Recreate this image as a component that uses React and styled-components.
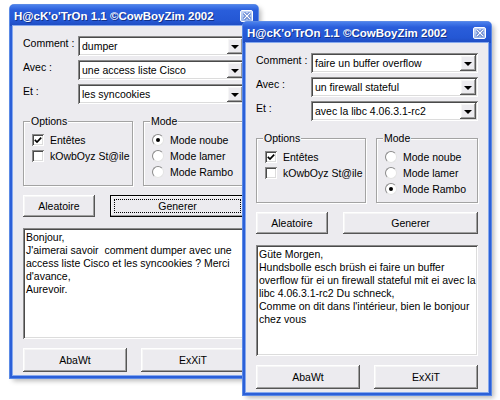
import React from "react";
import styled, { createGlobalStyle } from "styled-components";

const GlobalStyle = createGlobalStyle`
  html, body {
    margin: 0;
    padding: 0;
    background: #ffffff;
  }
  body {
    font-family: "Liberation Sans", Arial, sans-serif;
    font-size: 10.5px;
    color: #000;
  }
`;

const Desktop = styled.div`
  position: relative;
  width: 500px;
  height: 400px;
  overflow: hidden;
  background: #ffffff;
`;

const Frame = styled.div`
  position: absolute;
  left: ${(p) => p.$x}px;
  top: ${(p) => p.$y}px;
  width: 248px;
  box-sizing: border-box;
  padding: 0 3px 3px;
  background: #2c60d8;
  border-radius: 4px 4px 0 0;
  box-shadow: 0 0 0 1px #5b8ae6, 3px 3px 5px rgba(0, 0, 0, 0.28);
`;

const TitleBar = styled.div`
  height: 21px;
  margin: 0 -3px;
  padding: 0 5px 0 4px;
  display: flex;
  align-items: center;
  justify-content: space-between;
  border-radius: 4px 4px 0 0;
  background: linear-gradient(
    to bottom,
    #4a80ec 0%,
    #2a5edb 25%,
    #2457d4 75%,
    #1f4cc0 100%
  );
`;

const Title = styled.span`
  color: #ffffff;
  font-weight: bold;
  font-size: 11.5px;
  white-space: nowrap;
  text-shadow: 1px 1px 0 #12318a;
`;

const CloseBox = styled.div`
  width: 13px;
  height: 12px;
  box-sizing: border-box;
  border: 1px solid #ffffff;
  border-radius: 2px;
  background: linear-gradient(to bottom, #c6d6f6, #9ab6ea);
  display: grid;
  place-items: center;
`;

const Client = styled.div`
  background: #ecebef;
  padding: 10px 10px 3px;
  display: flex;
  flex-direction: column;
  box-shadow: 0 0 0 1px #86a9ee;
`;

const FieldGrid = styled.div`
  display: grid;
  grid-template-columns: 55px 1fr;
  row-gap: 4px;
`;

const FieldLabel = styled.span`
  padding-top: 1px;
  white-space: nowrap;
`;

const sunken = `
  box-shadow: inset 1px 1px #8a8a8a, inset -1px -1px #ffffff,
    inset 2px 2px #4a4a4a, inset -2px -2px #dcdcdc;
`;

const raised = `
  box-shadow: inset -1px -1px #555555, inset 1px 1px #ffffff,
    inset -2px -2px #a0a0a0, inset 2px 2px #f6f6f6;
`;

const Combo = styled.div`
  height: 20px;
  box-sizing: border-box;
  padding: 2px;
  background: #ffffff;
  display: flex;
  align-items: center;
  ${sunken}
`;

const ComboText = styled.span`
  flex: 1;
  padding-left: 2px;
  white-space: nowrap;
  overflow: hidden;
`;

const DropButton = styled.div`
  width: 16px;
  height: 16px;
  background: #ecebef;
  display: grid;
  place-items: center;
  ${raised}
  &::after {
    content: "";
    border-left: 4px solid transparent;
    border-right: 4px solid transparent;
    border-top: 4px solid #000;
    margin-top: 1px;
  }
`;

const Groups = styled.div`
  display: grid;
  grid-template-columns: 110px 1fr;
  gap: 10px;
  margin-top: 17px;
`;

const GroupBox = styled.div`
  position: relative;
  height: 65px;
  box-sizing: border-box;
  border: 1px solid #a3a3a3;
  box-shadow: inset 1px 1px #ffffff, 1px 1px #ffffff;
  padding: 10px 0 0 8px;
  display: flex;
  flex-direction: column;
`;

const Legend = styled.span`
  position: absolute;
  top: -7px;
  left: 6px;
  padding: 0 1px;
  background: #ecebef;
  line-height: 13px;
`;

const Choice = styled.div`
  height: 16px;
  display: flex;
  align-items: center;
  gap: 6px;
  white-space: nowrap;
`;

const CheckSquare = styled.span`
  width: 12px;
  height: 12px;
  box-sizing: border-box;
  background: #ffffff;
  display: grid;
  place-items: center;
  ${sunken}
`;

const RadioDot = styled.span`
  width: 12px;
  height: 12px;
  box-sizing: border-box;
  border-radius: 50%;
  background: #ffffff;
  border: 1px solid;
  border-color: #8a8a8a #e4e4e4 #e4e4e4 #8a8a8a;
  display: grid;
  place-items: center;
  &::after {
    content: "";
    width: 4px;
    height: 4px;
    border-radius: 50%;
    background: ${(p) => (p.$on ? "#000" : "transparent")};
  }
`;

const ButtonRow = styled.div`
  display: grid;
  grid-template-columns: ${(p) => p.$cols};
  gap: ${(p) => p.$gap}px;
  height: ${(p) => p.$h}px;
  margin-top: 9px;
`;

const Button = styled.div`
  position: relative;
  box-sizing: border-box;
  background: #ecebef;
  display: grid;
  place-items: center;
  white-space: nowrap;
  ${raised}
  ${(p) =>
    p.$default &&
    `
    outline: 1px solid #000;
    outline-offset: -1px;
    &::after {
      content: "";
      position: absolute;
      inset: 4px;
      border: 1px dotted #000;
    }
  `}
`;

const TextBox = styled.div`
  margin-top: 11px;
  height: 111px;
  box-sizing: border-box;
  padding: 3px 3px;
  background: #ffffff;
  line-height: 13px;
  white-space: pre;
  overflow: hidden;
  ${sunken}
`;

const Check = () => (
  <svg width="8" height="8" viewBox="0 0 8 8">
    <path d="M0.8 3.8 L3 6 L7.2 1.6" fill="none" stroke="#000" strokeWidth="1.7" />
  </svg>
);

const CloseX = () => (
  <svg width="8" height="8" viewBox="0 0 8 8">
    <path d="M1 1 L7 7 M7 1 L1 7" stroke="#2650b8" strokeWidth="2.6" />
    <path d="M1 1 L7 7 M7 1 L1 7" stroke="#ffffff" strokeWidth="1.4" />
  </svg>
);

const HackWindow = ({ x, y, fields, mode, focused, text }) => (
  <Frame $x={x} $y={y}>
    <TitleBar>
      <Title>H@cK'o'TrOn 1.1 ©CowBoyZim 2002</Title>
      <CloseBox>
        <CloseX />
      </CloseBox>
    </TitleBar>
    <Client>
      <FieldGrid>
        {["Comment :", "Avec :", "Et :"].map((label, i) => (
          <React.Fragment key={label}>
            <FieldLabel>{label}</FieldLabel>
            <Combo>
              <ComboText>{fields[i]}</ComboText>
              <DropButton />
            </Combo>
          </React.Fragment>
        ))}
      </FieldGrid>

      <Groups>
        <GroupBox>
          <Legend>Options</Legend>
          <Choice>
            <CheckSquare>
              <Check />
            </CheckSquare>
            Entêtes
          </Choice>
          <Choice>
            <CheckSquare />
            kOwbOyz St@ile
          </Choice>
        </GroupBox>
        <GroupBox>
          <Legend>Mode</Legend>
          {["Mode noube", "Mode lamer", "Mode Rambo"].map((m) => (
            <Choice key={m}>
              <RadioDot $on={m === mode} />
              {m}
            </Choice>
          ))}
        </GroupBox>
      </Groups>

      <ButtonRow $cols="72px 1fr" $gap={15} $h={22}>
        <Button>Aleatoire</Button>
        <Button $default={focused}>Generer</Button>
      </ButtonRow>

      <TextBox>{text}</TextBox>

      <ButtonRow $cols="1fr 1fr" $gap={14} $h={24}>
        <Button>AbaWt</Button>
        <Button>ExXiT</Button>
      </ButtonRow>
    </Client>
  </Frame>
);

const App = () => (
  <Desktop>
    <GlobalStyle />
    <HackWindow
      x={10}
      y={5}
      fields={["dumper", "une access liste Cisco", "les syncookies"]}
      mode="Mode noube"
      focused
      text={
        "Bonjour,\nJ'aimerai savoir  comment dumper avec une\naccess liste Cisco et les syncookies ? Merci\nd'avance,\nAurevoir."
      }
    />
    <HackWindow
      x={243}
      y={22}
      fields={["faire un buffer overflow", "un firewall stateful", "avec la libc 4.06.3.1-rc2"]}
      mode="Mode Rambo"
      text={
        "Güte Morgen,\nHundsbolle esch brüsh ei faire un buffer\noverflow für ei un firewall stateful mit ei avec la\nlibc 4.06.3.1-rc2 Du schneck,\nComme on dit dans l'intérieur, bien le bonjour\nchez vous"
      }
    />
  </Desktop>
);

export default App;
